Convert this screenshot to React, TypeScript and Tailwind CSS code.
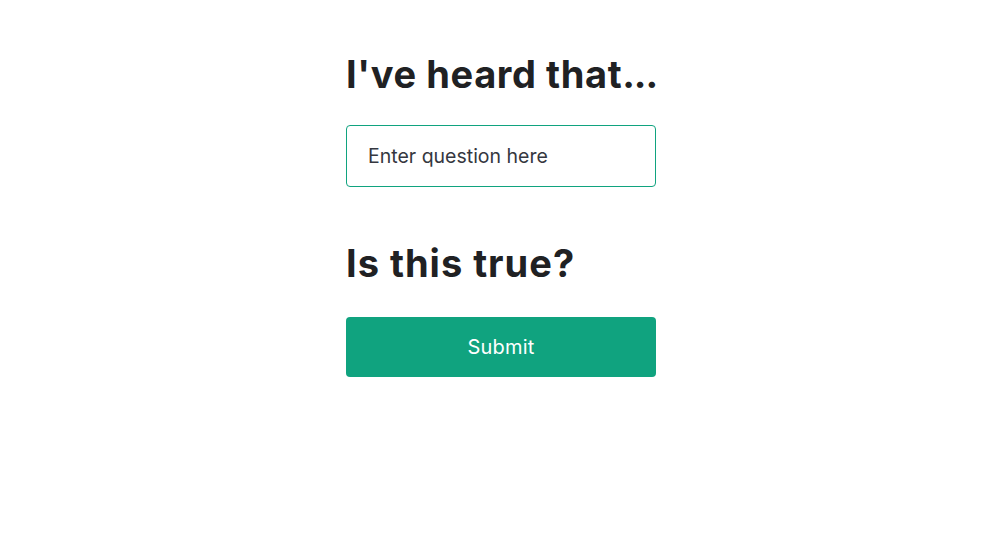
import React from "react";

export default function App() {
  return (
    <div className="min-h-[535px] w-full bg-white flex flex-col items-center pt-[51px] pl-[4px]" style={{ fontFamily: "Inter, 'Noto Sans', sans-serif" }}>
      <div className="w-[310px] flex flex-col">
        <h3 className="text-[38px] leading-[46px] font-bold text-[#202123] tracking-[0.6px] whitespace-nowrap">I've heard that<span className="tracking-[-1px]">...</span></h3>
        <input
          type="text"
          placeholder="Enter question here"
          className="mt-[28px] h-[62px] w-full border border-[#10a37f] rounded-[4px] pl-[21px] text-[19.5px] text-[#353740] placeholder:text-[#353740] outline-none"
        />
        <h3 className="mt-[53px] text-[38px] leading-[46px] font-bold text-[#202123] tracking-[1px]">Is this true?</h3>
        <button className="mt-[31px] h-[60px] w-full rounded-[4px] bg-[#10a37f] text-white text-[20px] tracking-[0.2px]">Submit</button>
      </div>
    </div>
  );
}
